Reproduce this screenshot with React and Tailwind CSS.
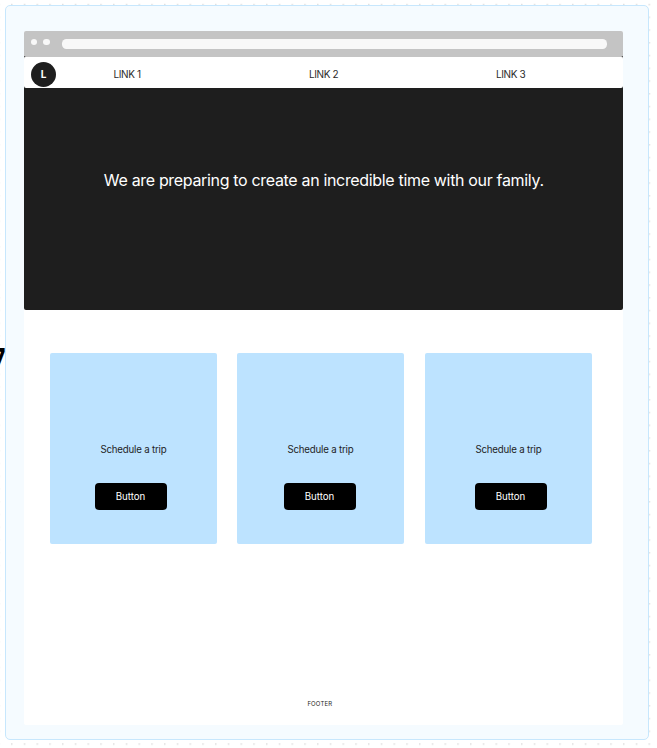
const cards = [
  { id: 1, button: 'ml-[45px]', place: '' },
  { id: 2, button: 'ml-[47px]', place: 'ml-5' },
  { id: 3, button: 'ml-[50px]', place: 'ml-[21px]' },
];

function CanvasDots() {
  return (
    <svg className="absolute inset-0 h-full w-full" aria-hidden="true">
      <defs>
        <pattern id="dots" x="11" y="3.8" width="12.75" height="12.75" patternUnits="userSpaceOnUse">
          <rect width="1.5" height="1.5" fill="#dddddd" />
        </pattern>
      </defs>
      <rect width="657" height="748" fill="url(#dots)" />
    </svg>
  );
}

function BrowserBar() {
  return (
    <div className="flex h-[26.5px] items-start rounded-t-[2px] bg-[#c4c4c4] pl-[6.3px]">
      <span className="mt-[8.4px] h-[6.6px] w-[6.6px] rounded-full bg-[#f8f8f8]" />
      <span className="mt-[8.4px] ml-[6.1px] h-[6.6px] w-[6.6px] rounded-full bg-[#f8f8f8]" />
      <span className="mt-[8.5px] ml-[12.4px] h-[9.7px] w-[544.5px] rounded-[4.5px] bg-[#f8f8f8]" />
    </div>
  );
}

function NavBar() {
  return (
    <nav className="flex h-[31.3px] items-center rounded-[2px] bg-white pl-[6.3px] pt-[3.5px] text-[10px] leading-none tracking-[-0.4px] text-[#2b2b2b]">
      <span className="flex h-[25.6px] w-[25.6px] shrink-0 items-center justify-center rounded-full bg-[#1e1e1e] text-[10px] font-bold text-white">L</span>
      <a className="ml-[57.3px] w-[28px] whitespace-nowrap">LINK 1</a>
      <a className="ml-[167.5px] w-[30px] whitespace-nowrap">LINK 2</a>
      <a className="ml-[157px] w-[30px] whitespace-nowrap">LINK 3</a>
    </nav>
  );
}

function TripCard({ button, place }) {
  return (
    <article className={`h-[191px] w-[167px] rounded-[2px] bg-[#bde3ff] pt-[91px] ${place}`}>
      <p className="text-center text-[9.7px] leading-3 tracking-[-0.19px] text-[#1e1e1e]">Schedule a trip</p>
      <button className={`mt-[27px] flex h-[27px] w-[72px] items-center justify-center rounded-[4px] bg-black pt-px pr-px text-[9.7px] text-white ${button}`}>
        Button
      </button>
    </article>
  );
}

export default function App() {
  return (
    <div className="relative h-[748px] w-[657px] overflow-hidden bg-white pl-[5px] pt-[5px] font-['Inter',sans-serif]">
      <CanvasDots />
      <main className="relative h-[735px] w-[644px] rounded-[5px] border border-[#c7e7fd] bg-[#f5fbff] pl-[18.4px] pt-[24.5px]">
        <div className="flex h-[694.5px] w-[598.8px] flex-col rounded-[2px] bg-white">
          <BrowserBar />
          <section className="-mt-[1px] h-[254px] rounded-b-[2px] bg-[#1e1e1e]">
            <div className="rounded-[2px] bg-gradient-to-b from-[#c4c4c4] from-50% to-[#1e1e1e] to-50% pt-px">
              <NavBar />
            </div>
            <h1 className="mt-[79.5px] text-center text-[16px] leading-6 tracking-[-0.33px] whitespace-nowrap text-white">
              We are preparing to create an incredible time with our family.
            </h1>
          </section>
          <div className="mt-[43px] flex pl-[25.6px]">
            {cards.map((card) => (
              <TripCard key={card.id} button={card.button} place={card.place} />
            ))}
          </div>
          <footer className="mt-auto pb-[17px] pr-2 text-center text-[6px] leading-2 tracking-[0.15px] text-[#1e1e1e]">FOOTER</footer>
        </div>
      </main>
      <span className="absolute right-[651.3px] top-[343.5px] origin-right scale-x-75 text-[26px] leading-[27px] font-extrabold text-black">7</span>
    </div>
  );
}
